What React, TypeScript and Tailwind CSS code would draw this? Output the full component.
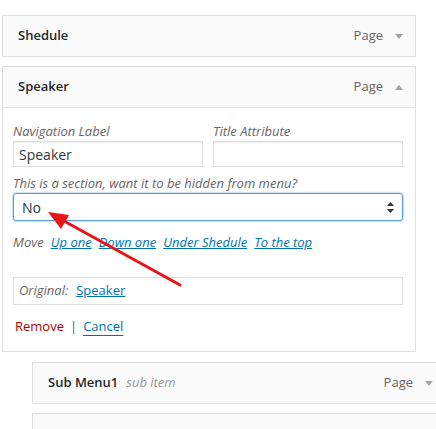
import React from "react";

const FONT = { fontFamily: '"Open Sans", "Noto Sans", sans-serif' };

function Caret({ up = false }: { up?: boolean }) {
  return (
    <svg width="8" height="5" viewBox="0 0 8 5" className="ml-[12px]">
      {up ? <path d="M0 5 L4 0 L8 5 Z" fill="#a0a5aa" /> : <path d="M0 0 L8 0 L4 5 Z" fill="#a0a5aa" />}
    </svg>
  );
}

function ItemBar({ title, sub, up }: { title: string; sub?: string; up?: boolean }) {
  return (
    <div className="flex h-[40px] items-center justify-between bg-[#fafafa] pl-[15px] pr-[12px]">
      <div className="flex items-baseline gap-[8px]">
        <span className="text-[13px] font-semibold text-[#23282d]">{title}</span>
        {sub && <span className="text-[13px] italic text-[#999]">{sub}</span>}
      </div>
      <div className="flex items-center">
        <span className="text-[13px] text-[#666]">Page</span>
        <Caret up={up} />
      </div>
    </div>
  );
}

export default function App() {
  const moves = ["Up one", "Down one", "Under Shedule", "To the top"];
  return (
    <div className="relative h-[429px] w-[436px] overflow-hidden bg-white" style={FONT}>
      <div className="pl-[2px] pt-[15px]">
        <div className="w-[414px] border border-[#dfdfdf]">
          <ItemBar title="Shedule" />
        </div>

        <div className="mt-[9px] w-[414px] border border-[#dfdfdf]">
          <ItemBar title="Speaker" up />
          <div className="border-t border-[#dfdfdf] bg-white pb-[15px] pl-[10px] pt-[15px]">
            <div className="flex gap-[10px]">
              <div className="w-[190px]">
                <div className="h-[17px] text-[13px] italic leading-[17px] text-[#666]">Navigation Label</div>
                <div className="mt-[1px] flex h-[26px] items-center border border-[#ddd] px-[5px] text-[14px] text-[#32373c] shadow-[inset_0_1px_2px_rgba(0,0,0,0.07)]">
                  Speaker
                </div>
              </div>
              <div className="w-[190px]">
                <div className="h-[17px] text-[13px] italic leading-[17px] text-[#666]">Title Attribute</div>
                <div className="mt-[1px] h-[26px] border border-[#ddd] shadow-[inset_0_1px_2px_rgba(0,0,0,0.07)]" />
              </div>
            </div>

            <div className="mt-[8px] h-[17px] text-[13px] italic leading-[17px] text-[#666]">
              This is a section, want it to be hidden from menu?
            </div>
            <div className="mt-[1px] flex h-[28px] w-[390px] items-center justify-between rounded-[3px] border border-[#5b9dd9] pl-[8px] pr-[8px] text-[14px] text-[#32373c] shadow-[0_0_2px_rgba(30,140,190,0.8)]">
              <span>No</span>
              <svg width="7" height="11" viewBox="0 0 7 11">
                <path d="M0 4 L3.5 0 L7 4 Z" fill="#32373c" />
                <path d="M0 7 L3.5 11 L7 7 Z" fill="#32373c" />
              </svg>
            </div>

            <div className="mt-[11px] flex h-[20px] items-center gap-[7px] text-[13px] italic leading-[20px]">
              <span className="text-[#666]">Move</span>
              {moves.map((m) => (
                <a key={m} className="text-[#0073aa] underline">
                  {m}
                </a>
              ))}
            </div>

            <div className="mt-[25px] flex h-[28px] w-[390px] items-center gap-[8px] border border-[#ddd] px-[5px] text-[13px]">
              <span className="italic text-[#666]">Original:</span>
              <a className="text-[#0073aa] underline">Speaker</a>
            </div>

            <div className="mt-[11px] flex h-[20px] items-center pl-[2px] text-[13px] leading-[20px]">
              <a className="text-[#a00]">Remove</a>
              <span className="mx-[6px] text-[#555]">|</span>
              <a className="text-[#0073aa] underline underline-offset-[4px]">Cancel</a>
            </div>
          </div>
        </div>

        <div className="ml-[30px] mt-[10px] w-[414px] border border-[#dfdfdf]">
          <ItemBar title="Sub Menu1" sub="sub item" />
        </div>
        <div className="ml-[30px] mt-[9px] h-[40px] w-[414px] border border-[#dfdfdf] bg-[#fafafa]" />
      </div>

      <svg className="pointer-events-none absolute left-0 top-0" width="436" height="429">
        <line x1="180" y1="285" x2="64" y2="221" stroke="#e8141a" strokeWidth="3" strokeLinecap="round" />
        <path d="M48 212 L69 215 L61 229 Z" fill="#e8141a" />
      </svg>
    </div>
  );
}
